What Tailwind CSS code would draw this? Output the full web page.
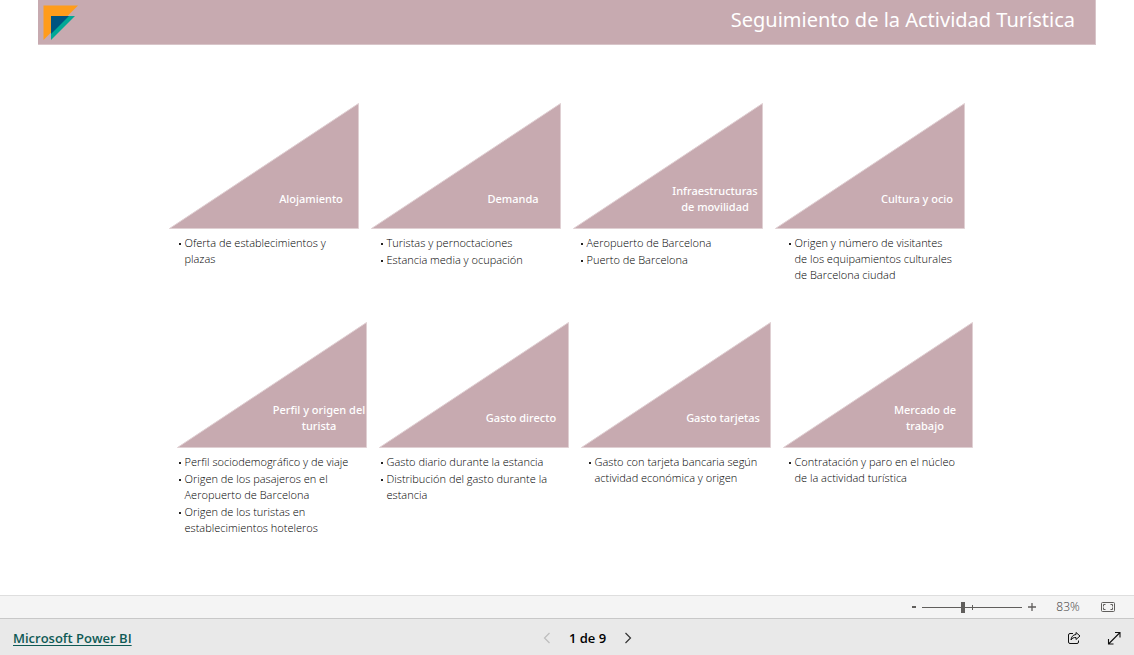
<!DOCTYPE html>
<html lang="es">
<head>
<meta charset="utf-8">
<meta name="viewport" content="width=device-width, initial-scale=1">
<title>Seguimiento de la Actividad Turística</title>
<script src="https://cdn.jsdelivr.net/npm/@tailwindcss/browser@4"></script>
</head>
<body class="flex min-h-screen flex-col bg-white font-['Segoe_UI','Open_Sans','Noto_Sans',sans-serif] text-black">
<svg class="hidden" aria-hidden="true">
  <symbol id="wedge" viewBox="0 0 190 126"><path d="M0.500 125.5L189.5 0.500V125.5Z" fill="#c7aab0" stroke="#e0d0d3" stroke-width="1"/></symbol>
</svg>

<header class="mx-[38px] flex h-[45px] items-start justify-between border-r border-b border-[#d8c5c9] bg-[#c7aab0] pr-5 pl-1">
  <svg class="mt-1 h-9 w-9" viewBox="0 0 36 36" role="img" aria-label="Logotipo">
    <path d="M1.5 1.5H36L1.5 36Z" fill="#ff9c1a"/>
    <path d="M9 12H33L9 36Z" fill="#00a896"/>
    <path d="M9 12H27L9 30Z" fill="#005480"/>
  </svg>
  <h1 class="mt-1 font-['Segoe_UI','Noto_Sans',sans-serif] text-xl leading-8 text-white">Seguimiento de la Actividad Turística</h1>
</header>

<main class="grow pt-[58px]">
  <section class="flex min-h-[219px] justify-center gap-3 pr-px">
    <article class="w-[190px]">
      <a href="#" class="relative flex h-[126px] items-end justify-end"><svg class="absolute inset-0 h-full w-full"><use href="#wedge"/></svg><span class="relative flex h-[60px] w-1/2 items-center justify-center text-center font-['Segoe_UI','Noto_Sans',sans-serif] text-[11px] leading-4 font-medium whitespace-nowrap text-white">Alojamiento</span></a>
      <ul class="flex flex-col gap-px pt-[6px] pl-4 text-[11px] leading-4 font-light whitespace-nowrap">
        <li class="relative before:absolute before:top-2 before:-left-[6px] before:size-0.5 before:bg-[#252423]">Oferta de establecimientos y<br>plazas</li>
      </ul>
    </article>
    <article class="w-[190px]">
      <a href="#" class="relative flex h-[126px] items-end justify-end"><svg class="absolute inset-0 h-full w-full"><use href="#wedge"/></svg><span class="relative flex h-[60px] w-1/2 items-center justify-center text-center font-['Segoe_UI','Noto_Sans',sans-serif] text-[11px] leading-4 font-medium whitespace-nowrap text-white">Demanda</span></a>
      <ul class="flex flex-col gap-px pt-[6px] pl-4 text-[11px] leading-4 font-light whitespace-nowrap">
        <li class="relative before:absolute before:top-2 before:-left-[6px] before:size-0.5 before:bg-[#252423]">Turistas y pernoctaciones</li>
        <li class="relative before:absolute before:top-2 before:-left-[6px] before:size-0.5 before:bg-[#252423]">Estancia media y ocupación</li>
      </ul>
    </article>
    <article class="w-[190px]">
      <a href="#" class="relative flex h-[126px] items-end justify-end"><svg class="absolute inset-0 h-full w-full"><use href="#wedge"/></svg><span class="relative flex h-[60px] w-1/2 items-center justify-center text-center font-['Segoe_UI','Noto_Sans',sans-serif] text-[11px] leading-4 font-medium whitespace-nowrap text-white">Infraestructuras<br>de movilidad</span></a>
      <ul class="flex flex-col gap-px pt-[6px] pl-[14px] text-[11px] leading-4 font-light whitespace-nowrap">
        <li class="relative before:absolute before:top-2 before:-left-[6px] before:size-0.5 before:bg-[#252423]">Aeropuerto de Barcelona</li>
        <li class="relative before:absolute before:top-2 before:-left-[6px] before:size-0.5 before:bg-[#252423]">Puerto de Barcelona</li>
      </ul>
    </article>
    <article class="w-[190px]">
      <a href="#" class="relative flex h-[126px] items-end justify-end"><svg class="absolute inset-0 h-full w-full"><use href="#wedge"/></svg><span class="relative flex h-[60px] w-1/2 items-center justify-center text-center font-['Segoe_UI','Noto_Sans',sans-serif] text-[11px] leading-4 font-medium whitespace-nowrap text-white">Cultura y ocio</span></a>
      <ul class="flex flex-col gap-px pt-[6px] pl-5 text-[11px] leading-4 font-light whitespace-nowrap">
        <li class="relative before:absolute before:top-2 before:-left-[6px] before:size-0.5 before:bg-[#252423]">Origen y número de visitantes<br>de los equipamientos culturales<br>de Barcelona ciudad</li>
      </ul>
    </article>
  </section>

  <section class="flex min-h-[219px] justify-center gap-3 pr-px pl-4">
    <article class="w-[190px]">
      <a href="#" class="relative flex h-[126px] items-end justify-end"><svg class="absolute inset-0 h-full w-full"><use href="#wedge"/></svg><span class="relative flex h-[60px] w-1/2 items-center justify-center text-center font-['Segoe_UI','Noto_Sans',sans-serif] text-[11px] leading-4 font-medium whitespace-nowrap text-white">Perfil y origen del<br>turista</span></a>
      <ul class="flex flex-col gap-px pt-[6px] pl-2 text-[11px] leading-4 font-light whitespace-nowrap">
        <li class="relative before:absolute before:top-2 before:-left-[6px] before:size-0.5 before:bg-[#252423]">Perfil sociodemográfico y de viaje</li>
        <li class="relative before:absolute before:top-2 before:-left-[6px] before:size-0.5 before:bg-[#252423]">Origen de los pasajeros en el<br>Aeropuerto de Barcelona</li>
        <li class="relative before:absolute before:top-2 before:-left-[6px] before:size-0.5 before:bg-[#252423]">Origen de los turistas en<br>establecimientos hoteleros</li>
      </ul>
    </article>
    <article class="w-[190px]">
      <a href="#" class="relative flex h-[126px] items-end justify-end"><svg class="absolute inset-0 h-full w-full"><use href="#wedge"/></svg><span class="relative flex h-[60px] w-1/2 items-center justify-center text-center font-['Segoe_UI','Noto_Sans',sans-serif] text-[11px] leading-4 font-medium whitespace-nowrap text-white">Gasto directo</span></a>
      <ul class="flex flex-col gap-px pt-[6px] pl-2 text-[11px] leading-4 font-light whitespace-nowrap">
        <li class="relative before:absolute before:top-2 before:-left-[6px] before:size-0.5 before:bg-[#252423]">Gasto diario durante la estancia</li>
        <li class="relative before:absolute before:top-2 before:-left-[6px] before:size-0.5 before:bg-[#252423]">Distribución del gasto durante la<br>estancia</li>
      </ul>
    </article>
    <article class="w-[190px]">
      <a href="#" class="relative flex h-[126px] items-end justify-end"><svg class="absolute inset-0 h-full w-full"><use href="#wedge"/></svg><span class="relative flex h-[60px] w-1/2 items-center justify-center text-center font-['Segoe_UI','Noto_Sans',sans-serif] text-[11px] leading-4 font-medium whitespace-nowrap text-white">Gasto tarjetas</span></a>
      <ul class="flex flex-col gap-px pt-[6px] pl-[14px] text-[11px] leading-4 font-light whitespace-nowrap">
        <li class="relative before:absolute before:top-2 before:-left-[6px] before:size-0.5 before:bg-[#252423]">Gasto con tarjeta bancaria según<br>actividad económica y origen</li>
      </ul>
    </article>
    <article class="w-[190px]">
      <a href="#" class="relative flex h-[126px] items-end justify-end"><svg class="absolute inset-0 h-full w-full"><use href="#wedge"/></svg><span class="relative flex h-[60px] w-1/2 items-center justify-center text-center font-['Segoe_UI','Noto_Sans',sans-serif] text-[11px] leading-4 font-medium whitespace-nowrap text-white">Mercado de<br>trabajo</span></a>
      <ul class="flex flex-col gap-px pt-[6px] pl-3 text-[11px] leading-4 font-light whitespace-nowrap">
        <li class="relative before:absolute before:top-2 before:-left-[6px] before:size-0.5 before:bg-[#252423]">Contratación y paro en el núcleo<br>de la actividad turística</li>
      </ul>
    </article>
  </section>
</main>

<div class="flex h-[23px] items-center justify-end border-t border-[#dedede] bg-[#f4f4f4] pr-[18px] text-[#3b3a39]">
  <button type="button" class="flex h-4 w-4 items-center justify-center" aria-label="Alejar"><svg class="size-2" viewBox="0 0 8 8"><path d="M2 4h4" stroke="#605e5c" stroke-width="2"/></svg></button>
  <div class="relative flex h-4 w-[100px] items-center">
    <span class="absolute top-[6px] left-[50px] h-[5px] w-px bg-[#605e5c]"></span>
    <input type="range" min="0" max="100" value="41" aria-label="Zoom" class="relative h-4 w-full appearance-none bg-transparent [&::-webkit-slider-runnable-track]:h-px [&::-webkit-slider-runnable-track]:bg-[#605e5c] [&::-webkit-slider-thumb]:-mt-[5px] [&::-webkit-slider-thumb]:h-[11px] [&::-webkit-slider-thumb]:w-1 [&::-webkit-slider-thumb]:appearance-none [&::-webkit-slider-thumb]:bg-[#605e5c]">
  </div>
  <button type="button" class="ml-0.5 flex h-4 w-4 items-center justify-center" aria-label="Acercar"><svg class="size-2" viewBox="0 0 8 8"><path d="M0 4h8M4 0v8" stroke="#605e5c" stroke-width="1.3"/></svg></button>
  <span class="ml-4 w-6 text-center text-xs leading-4 font-light">83%</span>
  <button type="button" class="ml-5 flex h-4 w-4 items-center justify-center" aria-label="Ajustar a la página"><svg class="h-3 w-4" viewBox="0 0 16 12" fill="none" stroke="#605e5c"><rect x="1.5" y="1.5" width="13" height="9" rx="1"/><path d="M5.5 3.5h-2v2M3.5 6.500v2h2M10.500 3.500h2v2M12.500 6.500v2h-2"/></svg></button>
</div>

<footer class="grid h-[37px] grid-cols-[1fr_auto_1fr] items-center border-t border-[#c8c8c8] bg-[#e9e9e9] pt-0.5 pr-3 pl-[13px]">
  <a href="#" class="justify-self-start text-[13px] leading-5 font-semibold text-[#0f5a55] underline underline-offset-2">Microsoft Power BI</a>
  <nav class="flex items-center gap-4 pl-10" aria-label="Páginas">
    <button type="button" disabled aria-label="Página anterior"><svg class="size-3" viewBox="0 0 12 12" fill="none" stroke="#bdbdbd" stroke-width="1.200"><path d="M8.500 1L3.500 6l5 5"/></svg></button>
    <span class="text-[13px] leading-5 font-semibold text-black">1 de 9</span>
    <button type="button" aria-label="Página siguiente"><svg class="size-3" viewBox="0 0 12 12" fill="none" stroke="#333" stroke-width="1.200"><path d="M3.500 1l5 5-5 5"/></svg></button>
  </nav>
  <div class="flex items-center gap-6 justify-self-end">
    <button type="button" aria-label="Compartir"><svg class="size-4" viewBox="0 0 16 16" fill="none" stroke="#111" stroke-linejoin="round"><path d="M7 3.500H4A1.500 1.500 0 0 0 2.500 5v7A1.500 1.500 0 0 0 4 13.500h7a1.500 1.500 0 0 0 1.500-1.500v-1.500"/><path d="M10 2.500L14 6l-4 3.500V7.500C7.500 7.300 6 8.300 5 10c.2-3 2-5.300 5-5.500Z"/></svg></button>
    <button type="button" aria-label="Pantalla completa"><svg class="size-4" viewBox="0 0 16 16" fill="none" stroke="#111" stroke-width="1.100"><path d="M2.500 14L14 2.500M9 2.500h5v5M2.500 9v5h5"/></svg></button>
  </div>
</footer>
</body>
</html>
